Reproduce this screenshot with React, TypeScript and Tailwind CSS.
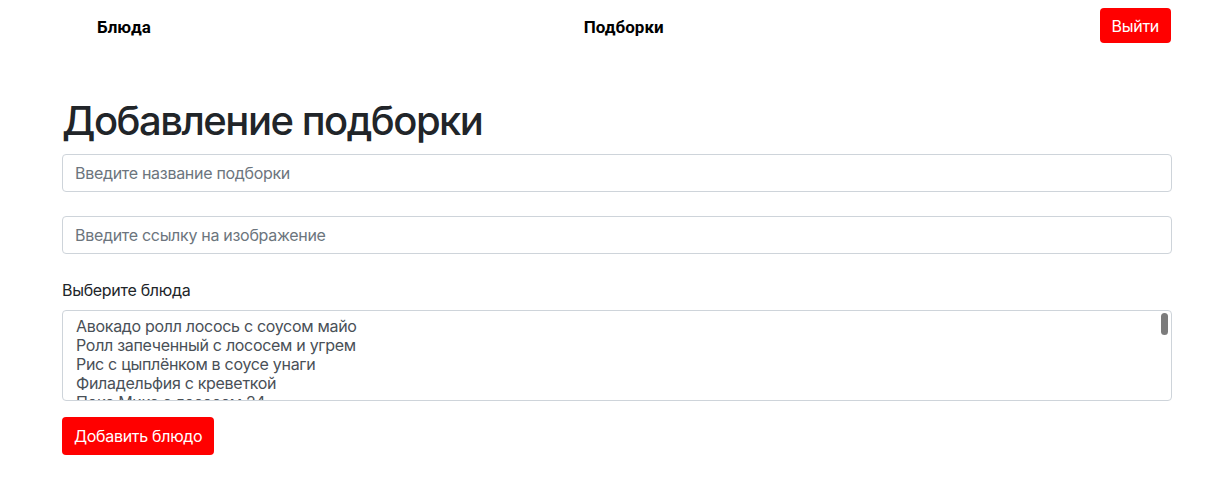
const dishes = [
    'Авокадо ролл лосось с соусом майо',
    'Ролл запеченный с лососем и угрем',
    'Рис с цыплёнком в соусе унаги',
    'Филадельфия с креветкой',
    'Поке Микс с лососем 24',
];

export default function App() {
    return (
        <div className="bg-white min-h-screen text-[#212529] tracking-[-0.3px]" style={{ fontFamily: 'Inter, "Liberation Sans", sans-serif' }}>
            {/* Top nav */}
            <header className="flex items-start h-[51px] pt-2">
                <a className="ml-[97px] mt-[9px] text-[17px] leading-5 font-bold text-black tracking-normal" style={{ fontFamily: 'Roboto, sans-serif' }}>Блюда</a>
                <a className="ml-[433px] mt-[9px] text-[17px] leading-5 font-bold text-black tracking-normal" style={{ fontFamily: 'Roboto, sans-serif' }}>Подборки</a>
                <button className="ml-auto mr-[50px] h-[35px] px-3 rounded bg-[#ff0000] text-white text-base">Выйти</button>
            </header>

            <main className="ml-[62px] w-[1110px] pt-[46px]">
                <h1 className="text-[40px] leading-[48px] font-[550] tracking-[-1.5px] mb-[9px]">Добавление подборки</h1>

                <input
                    className="block w-full h-[38px] px-3 border border-[#ced4da] rounded text-base placeholder:text-[#6c757d]"
                    placeholder="Введите название подборки"
                />
                <input
                    className="block w-full h-[38px] px-3 mt-[24px] border border-[#ced4da] rounded text-base placeholder:text-[#6c757d]"
                    placeholder="Введите ссылку на изображение"
                />

                <label className="block mt-[24px] mb-[8px] text-base leading-6">Выберите блюда</label>
                <div className="relative h-[91px] border border-[#ced4da] rounded overflow-hidden pt-[6px] px-[13px]">
                    {dishes.map((d) => (
                        <div key={d} className="text-base leading-[19px] text-[#495057]">{d}</div>
                    ))}
                    <div className="absolute right-[3px] top-[2px] w-[7px] h-[22px] rounded-full bg-[#7c7c7c]"></div>
                </div>

                <button className="mt-4 h-[38px] px-3 rounded bg-[#ff0000] text-white text-base">Добавить блюдо</button>
            </main>
        </div>
    );
}
